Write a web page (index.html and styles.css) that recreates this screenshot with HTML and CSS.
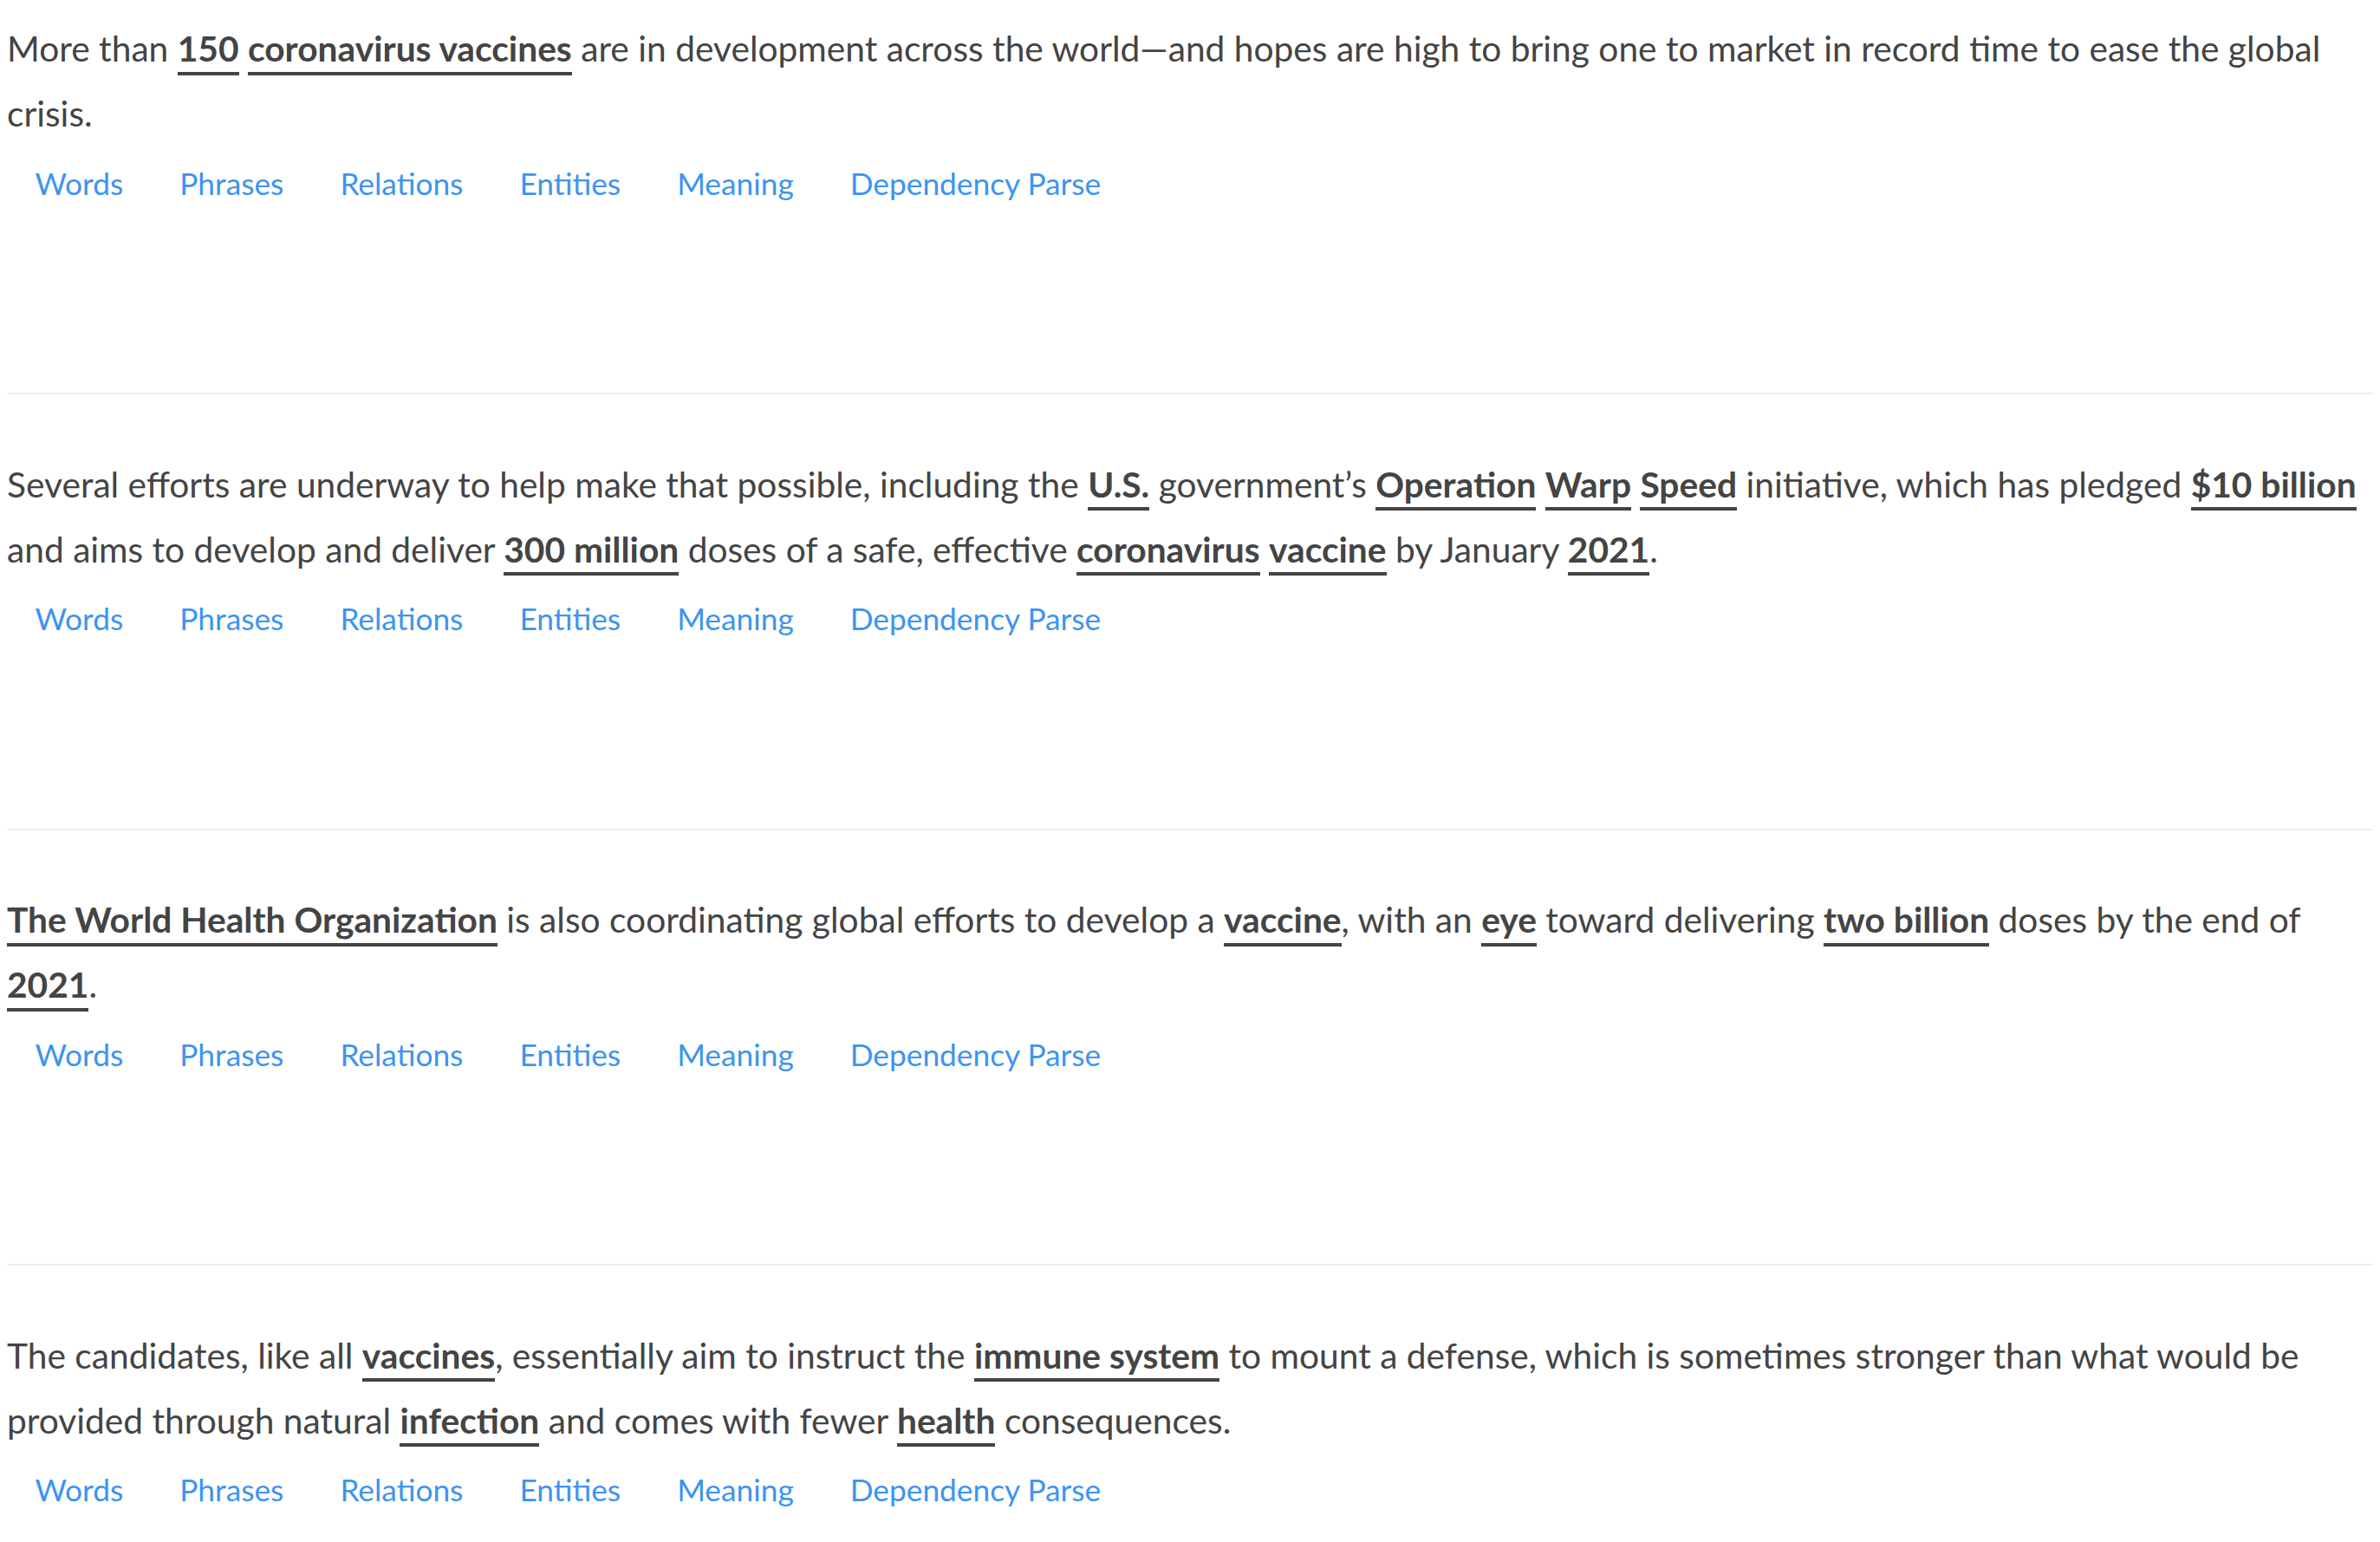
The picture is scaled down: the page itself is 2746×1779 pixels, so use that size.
FILE: index.html
```html
<!DOCTYPE html>
<html lang="en">
<head>
<meta charset="utf-8">
<title>Sentences</title>
<link rel="stylesheet" href="styles.css">
</head>
<body>
<main class="doc">
  <section class="sent">
    <p class="text">More than <span class="ent">150</span> <span class="ent">coronavirus vaccines</span> are in development across the world—and hopes are high to bring one to market in record time to ease the global<br>crisis.</p>
    <nav class="tabs"><a class="tab" href="#">Words</a><a class="tab" href="#">Phrases</a><a class="tab" href="#">Relations</a><a class="tab" href="#">Entities</a><a class="tab" href="#">Meaning</a><a class="tab" href="#">Dependency Parse</a></nav>
    <div class="panel"></div>
  </section>
  <section class="sent">
    <p class="text">Several efforts are underway to help make that possible, including the <span class="ent">U.S.</span> government’s <span class="ent">Operation</span> <span class="ent">Warp</span> <span class="ent">Speed</span> initiative, which has pledged <span class="ent">$10 billion</span><br>and aims to develop and deliver <span class="ent">300 million</span> doses of a safe, effective <span class="ent">coronavirus</span> <span class="ent">vaccine</span> by January <span class="ent">2021</span>.</p>
    <nav class="tabs"><a class="tab" href="#">Words</a><a class="tab" href="#">Phrases</a><a class="tab" href="#">Relations</a><a class="tab" href="#">Entities</a><a class="tab" href="#">Meaning</a><a class="tab" href="#">Dependency Parse</a></nav>
    <div class="panel"></div>
  </section>
  <section class="sent">
    <p class="text"><span class="ent">The World Health Organization</span> is also coordinating global efforts to develop a <span class="ent">vaccine</span>, with an <span class="ent">eye</span> toward delivering <span class="ent">two billion</span> doses by the end of<br><span class="ent">2021</span>.</p>
    <nav class="tabs"><a class="tab" href="#">Words</a><a class="tab" href="#">Phrases</a><a class="tab" href="#">Relations</a><a class="tab" href="#">Entities</a><a class="tab" href="#">Meaning</a><a class="tab" href="#">Dependency Parse</a></nav>
    <div class="panel"></div>
  </section>
  <section class="sent">
    <p class="text">The candidates, like all <span class="ent">vaccines</span>, essentially aim to instruct the <span class="ent">immune system</span> to mount a defense, which is sometimes stronger than what would be<br>provided through natural <span class="ent">infection</span> and comes with fewer <span class="ent">health</span> consequences.</p>
    <nav class="tabs"><a class="tab" href="#">Words</a><a class="tab" href="#">Phrases</a><a class="tab" href="#">Relations</a><a class="tab" href="#">Entities</a><a class="tab" href="#">Meaning</a><a class="tab" href="#">Dependency Parse</a></nav>
    <div class="panel"></div>
  </section>
</main>
</body>
</html>
```

FILE: styles.css
```css
html, body {
  background: #ffffff;
}

body {
  margin: 8px;
  font-family: Lato, "Open Sans", "Liberation Sans", sans-serif;
  color: #444444;
}

.doc {
  display: flex;
  flex-direction: column;
  gap: 55px;
}

.sent {
  padding-top: 10.3px;
  border-bottom: 2px solid #eeeeee;
}

.text {
  margin: 0;
  font-size: 40.7px;
  line-height: 75px;
  white-space: nowrap;
}

.ent {
  font-weight: 700;
  border-bottom: 4px solid #444444;
  padding-bottom: 2.5px;
}

.tabs {
  display: flex;
  margin-top: 22.4px;
}

.tab {
  padding: 0 32.5px;
  font-size: 35.3px;
  line-height: 42px;
  color: #3d94f0;
  text-decoration: none;
}

.panel {
  height: 220.8px;
}
```
